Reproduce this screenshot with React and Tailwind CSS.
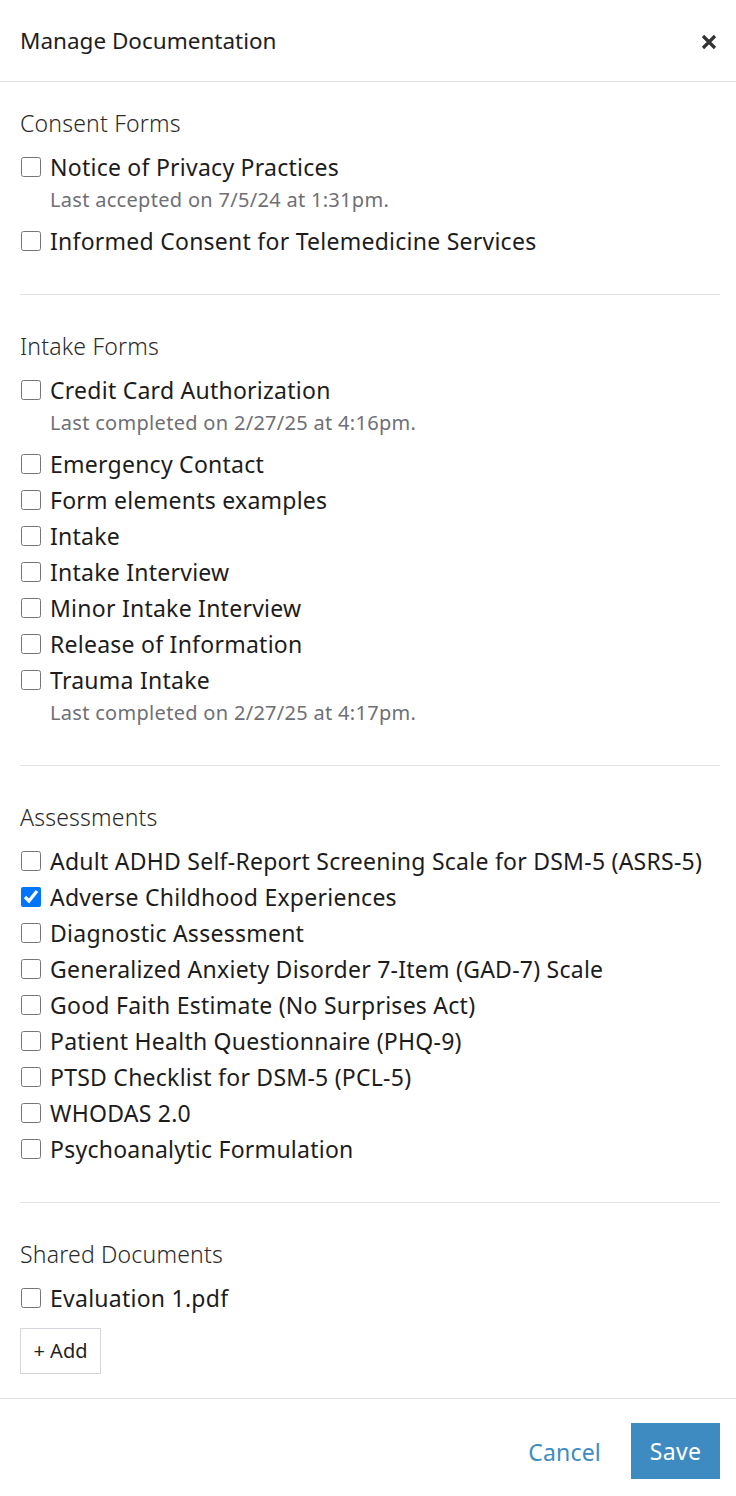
import React from "react";

const font = { fontFamily: '"Noto Sans", "Open Sans", sans-serif' };

function Item({ label, sub, checked, gapAfter }) {
  return (
    <div className="flex flex-col">
      <label className="flex items-center h-9 gap-[9px]">
        <input type="checkbox" defaultChecked={checked} className="m-0 ml-px w-5 h-5 shrink-0" />
        <span className="text-[23px] tracking-[0.25px] text-[#1c1c1c] leading-none whitespace-nowrap">{label}</span>
      </label>
      {sub && (
        <div className={"pl-[30px] text-[20px] tracking-[0.3px] text-[#6f6f75] leading-[30px] h-[32px] whitespace-nowrap " + (gapAfter ? "mb-[6px]" : "")}>
          {sub}
        </div>
      )}
    </div>
  );
}

function Section({ title, children, last, first }) {
  return (
    <div className="pl-5 pr-4">
      <div className={(first ? "pt-[26px] " : "pt-[36px] ") + (last ? "" : "pb-[35px] border-b border-[#e3e3e6]")}>
        <div className="text-[23px] tracking-[0.2px] font-light text-[#2a2a2a] leading-[30px] h-[30px] mb-[11px] whitespace-nowrap">{title}</div>
        <div className="flex flex-col">{children}</div>
      </div>
    </div>
  );
}

export default function App() {
  return (
    <div className="w-[736px] h-[1496px] bg-white flex flex-col overflow-hidden" style={font}>
      <div className="h-[82px] border-b border-[#e3e3e6] flex items-center justify-between pl-5 pr-[19px] shrink-0">
        <div className="text-[22.5px] text-[#1e1e1e] whitespace-nowrap">Manage Documentation</div>
        <svg width="16" height="16" viewBox="0 0 16 16" className="mt-[2px]">
          <path d="M2 2 L14 14 M14 2 L2 14" stroke="#333" strokeWidth="3.2" strokeLinecap="butt" />
        </svg>
      </div>
      <div className="flex-1">
        <Section title="Consent Forms" first>
          <Item label="Notice of Privacy Practices" sub="Last accepted on 7/5/24 at 1:31pm." gapAfter />
          <Item label="Informed Consent for Telemedicine Services" />
        </Section>
        <Section title="Intake Forms">
          <Item label="Credit Card Authorization" sub="Last completed on 2/27/25 at 4:16pm." gapAfter />
          <Item label="Emergency Contact" />
          <Item label="Form elements examples" />
          <Item label="Intake" />
          <Item label="Intake Interview" />
          <Item label="Minor Intake Interview" />
          <Item label="Release of Information" />
          <Item label="Trauma Intake" sub="Last completed on 2/27/25 at 4:17pm." />
        </Section>
        <Section title="Assessments">
          <Item label="Adult ADHD Self-Report Screening Scale for DSM-5 (ASRS-5)" />
          <Item label="Adverse Childhood Experiences" checked />
          <Item label="Diagnostic Assessment" />
          <Item label="Generalized Anxiety Disorder 7-Item (GAD-7) Scale" />
          <Item label="Good Faith Estimate (No Surprises Act)" />
          <Item label="Patient Health Questionnaire (PHQ-9)" />
          <Item label="PTSD Checklist for DSM-5 (PCL-5)" />
          <Item label="WHODAS 2.0" />
          <Item label="Psychoanalytic Formulation" />
        </Section>
        <Section title="Shared Documents" last>
          <Item label="Evaluation 1.pdf" />
          <button className="mt-[12px] w-[81px] h-[46px] border border-[#d3d6dc] text-[20px] text-[#1f1f1f] flex items-center justify-center">
            + Add
          </button>
        </Section>
      </div>
      <div className="h-[98px] border-t border-[#e3e3e6] flex items-start justify-end px-4 shrink-0">
        <button className="mt-[25px] h-[56px] mr-[30px] text-[23px] tracking-[0.2px] text-[#3d8bc0]">Cancel</button>
        <button className="mt-[24px] w-[89px] h-[56px] bg-[#3d8bc0] text-white text-[23px] tracking-[0.3px]">Save</button>
      </div>
    </div>
  );
}
